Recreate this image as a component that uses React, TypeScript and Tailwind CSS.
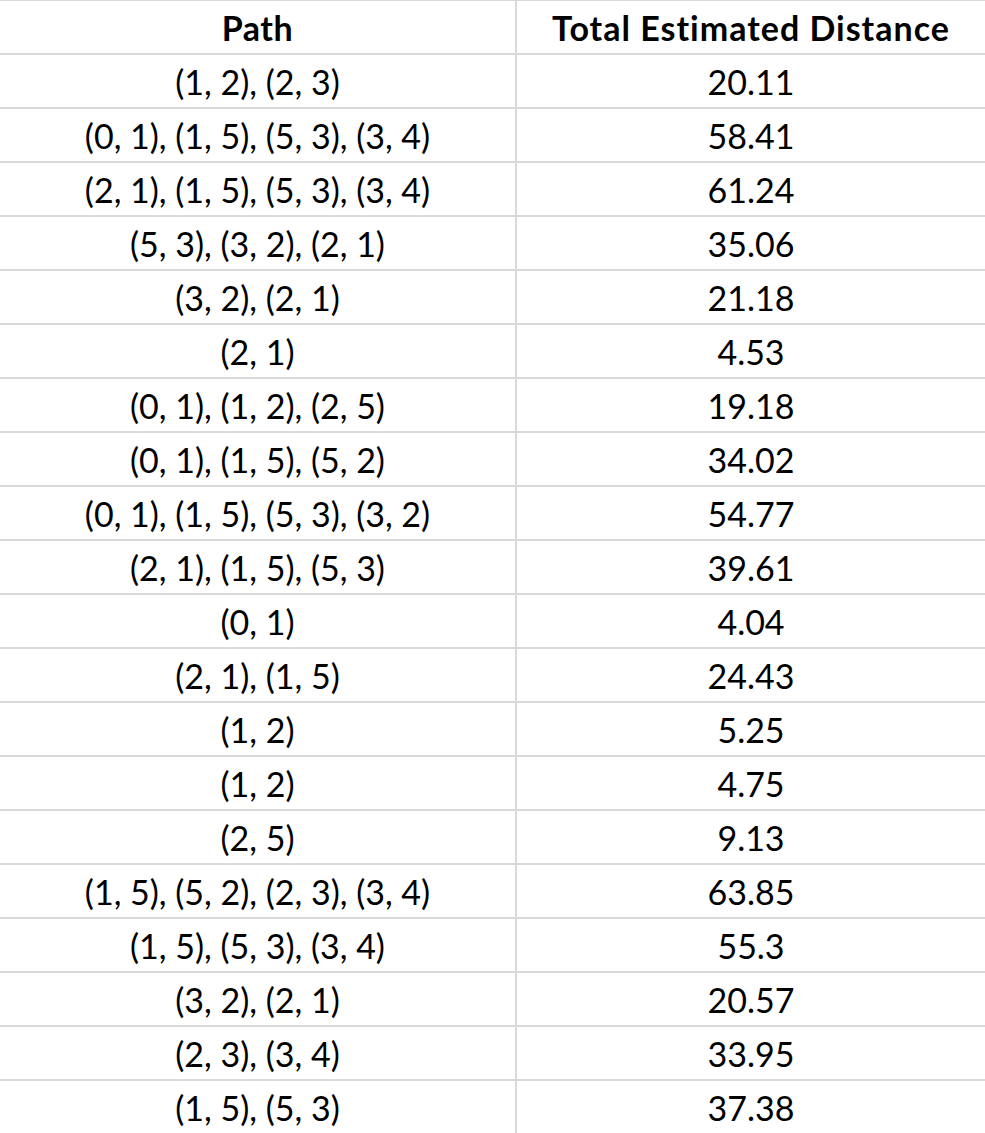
import React from "react";

const rows: [string, string][] = [
  ["(1, 2), (2, 3)", "20.11"],
  ["(0, 1), (1, 5), (5, 3), (3, 4)", "58.41"],
  ["(2, 1), (1, 5), (5, 3), (3, 4)", "61.24"],
  ["(5, 3), (3, 2), (2, 1)", "35.06"],
  ["(3, 2), (2, 1)", "21.18"],
  ["(2, 1)", "4.53"],
  ["(0, 1), (1, 2), (2, 5)", "19.18"],
  ["(0, 1), (1, 5), (5, 2)", "34.02"],
  ["(0, 1), (1, 5), (5, 3), (3, 2)", "54.77"],
  ["(2, 1), (1, 5), (5, 3)", "39.61"],
  ["(0, 1)", "4.04"],
  ["(2, 1), (1, 5)", "24.43"],
  ["(1, 2)", "5.25"],
  ["(1, 2)", "4.75"],
  ["(2, 5)", "9.13"],
  ["(1, 5), (5, 2), (2, 3), (3, 4)", "63.85"],
  ["(1, 5), (5, 3), (3, 4)", "55.3"],
  ["(3, 2), (2, 1)", "20.57"],
  ["(2, 3), (3, 4)", "33.95"],
  ["(1, 5), (5, 3)", "37.38"],
];

export default function App() {
  return (
    <div
      className="w-[985px] h-[1133px] overflow-hidden bg-white text-black border-t border-[#d9d9d9]"
      style={{ fontFamily: "Lato, 'Open Sans', sans-serif" }}
    >
      <div className="flex h-[54px] border-b-2 border-[#d9d9d9]">
        <div className="w-[517px] flex items-center justify-center text-[34px] font-bold tracking-[0.5px] border-r-2 border-[#d9d9d9]">
          Path
        </div>
        <div className="flex-1 flex items-center justify-center text-[34px] font-bold tracking-[1px]">
          Total Estimated Distance
        </div>
      </div>
      {rows.map(([p, d], i) => (
        <div key={i} className="flex h-[54px] border-b-2 border-[#d9d9d9]">
          <div className="w-[517px] flex items-center justify-center text-[34px] border-r-2 border-[#d9d9d9]">
            {p}
          </div>
          <div className="flex-1 flex items-center justify-center text-[34px]">{d}</div>
        </div>
      ))}
    </div>
  );
}
